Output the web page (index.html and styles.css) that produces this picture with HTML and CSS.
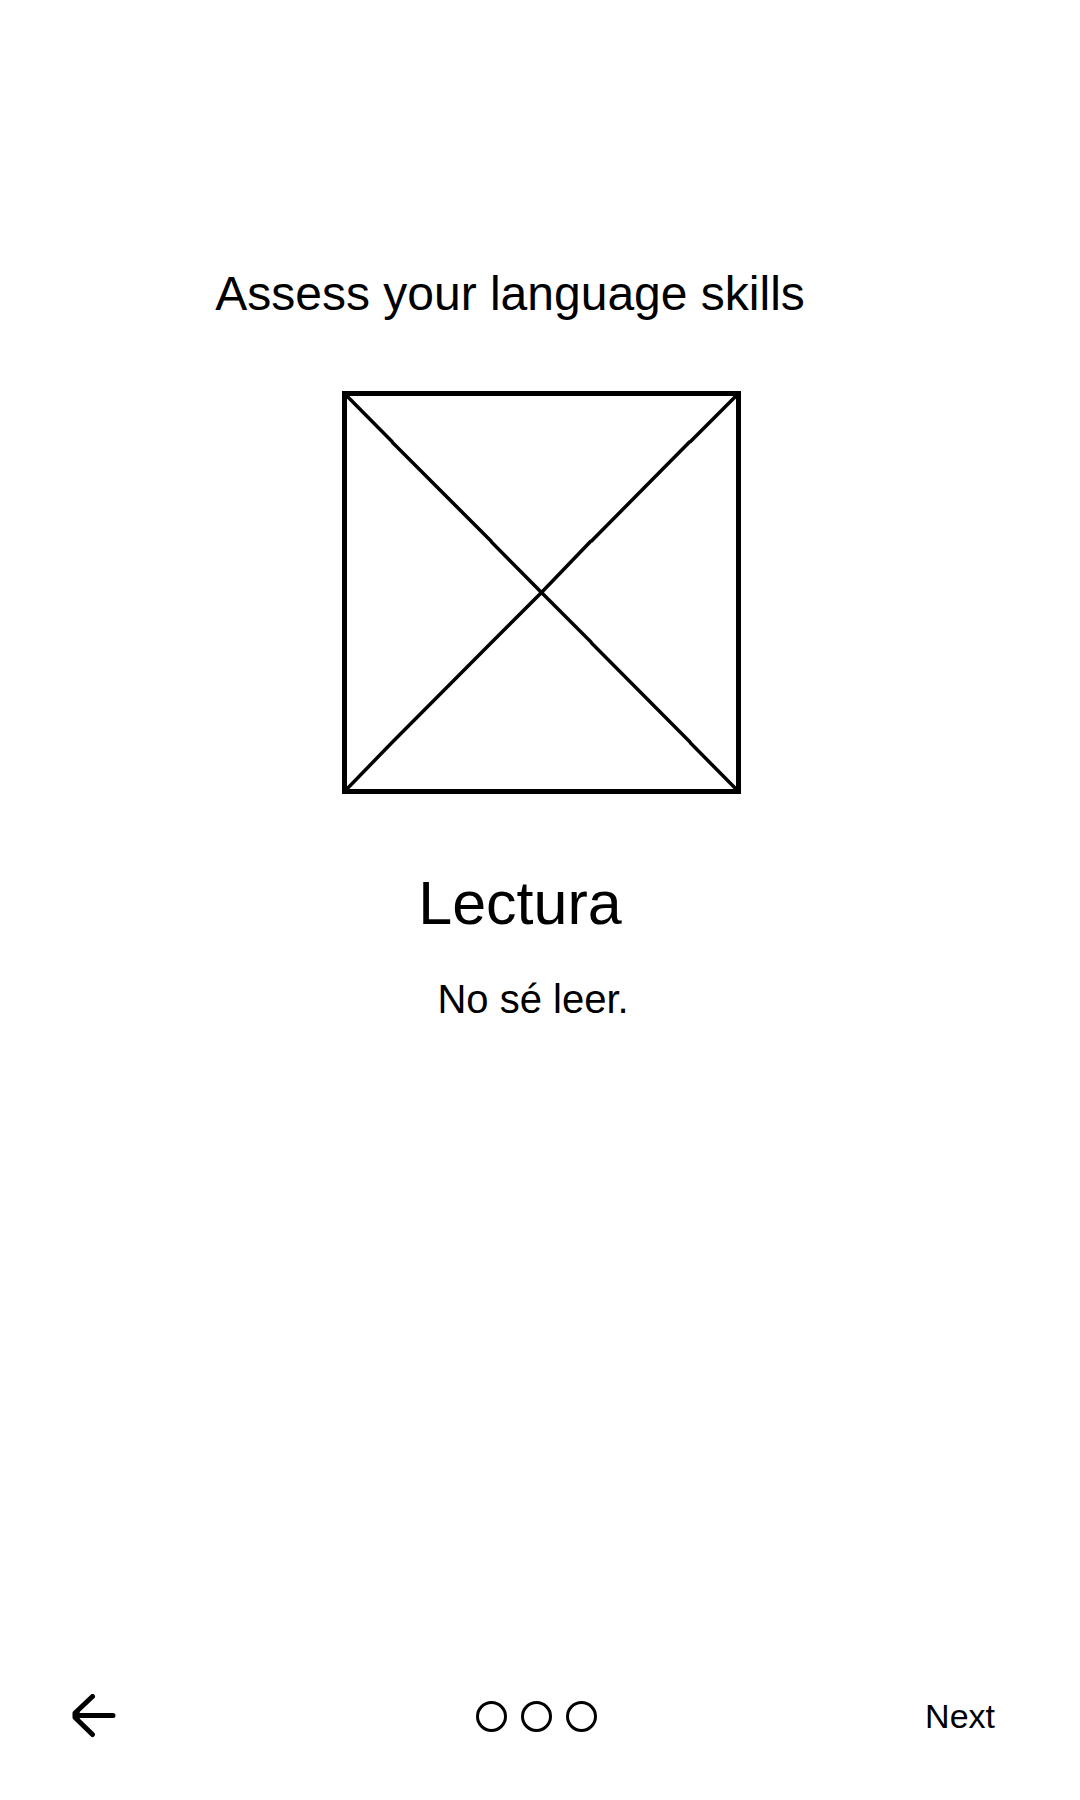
FILE: index.html
```html
<!DOCTYPE html>
<html lang="en">
<head>
<meta charset="utf-8">
<meta name="viewport" content="width=device-width, initial-scale=1">
<title>Assess your language skills</title>
<link rel="stylesheet" href="styles.css">
</head>
<body>
<main class="assessment">
  <h1 class="title">Assess your language skills</h1>
  <svg class="placeholder" viewBox="0 0 400 404" role="img" aria-label="Image placeholder">
    <rect x="2.5" y="2.5" width="394" height="398" fill="none" stroke="#000" stroke-width="5"/>
    <path d="M1 1L50 50.500L50.500 51.500L149 150L149.500 151L199.500 201.500L249 251L249.500 252L348 351L348.500 352L398 402M398 1L348.500 50.500L347.500 51L249.500 150L248.500 150.500L199.500 201.500L150 251L149 252L51 350.500L50 351.500L1 402" fill="none" stroke="#000" stroke-width="3.500"/>
  </svg>
  <h2 class="skill">Lectura</h2>
  <p class="level" lang="es">No sé leer.</p>
</main>
<nav class="pager" aria-label="Steps">
  <button class="back" type="button" aria-label="Back">
    <svg class="arrow" viewBox="0 0 44 44" aria-hidden="true">
      <path d="M20.500 2.500L3 19V23.500L20.500 40.500M3 21.500H41" fill="none" stroke="#000" stroke-width="5" stroke-linecap="round" stroke-linejoin="round"/>
      <path d="M3 21.500L7 17L9 21.500L7 26Z"/>
    </svg>
  </button>
  <div class="dots">
    <button class="dot" type="button" aria-label="Step 1"></button>
    <button class="dot" type="button" aria-label="Step 2"></button>
    <button class="dot" type="button" aria-label="Step 3"></button>
  </div>
  <button class="next" type="button">Next</button>
</nav>
</body>
</html>
```
FILE: styles.css
```css
* {
  box-sizing: border-box;
}

body {
  margin: 0;
  min-height: 100vh;
  display: flex;
  flex-direction: column;
  background: #fff;
  color: #000;
  font-family: "Liberation Sans", Arial, sans-serif;
}

.assessment {
  flex: 1;
  display: flex;
  flex-direction: column;
  align-items: center;
  padding-top: 264px;
}

.title,
.skill,
.level {
  margin: 0;
  font-weight: 400;
}

.title {
  padding-right: 60px;
  font-size: 48px;
  line-height: 60px;
}

.placeholder {
  width: 400px;
  max-width: 100%;
  margin: 67px 0 72px;
  margin-left: 4px;
}

.skill {
  padding-right: 40px;
  font-size: 61px;
  line-height: 72px;
}

.level {
  padding-right: 14px;
  margin-top: 36px;
  font-size: 40px;
  line-height: 48px;
}

.pager {
  display: grid;
  grid-template-columns: 1fr auto 1fr;
  align-items: center;
  padding: 0 79px 62px 72px;
}

.back,
.dot,
.next {
  padding: 0;
  border: 0;
  background: none;
  color: inherit;
  font: inherit;
  cursor: pointer;
}

.back {
  justify-self: start;
}

.arrow {
  display: block;
  width: 44px;
  height: 44px;
}

.dots {
  display: flex;
  gap: 14px;
}

.dot {
  width: 31px;
  height: 31px;
  border: 3px solid #000;
  border-radius: 50%;
}

.next {
  justify-self: end;
  margin-right: 6px;
  font-size: 34px;
  line-height: 44px;
}
```
